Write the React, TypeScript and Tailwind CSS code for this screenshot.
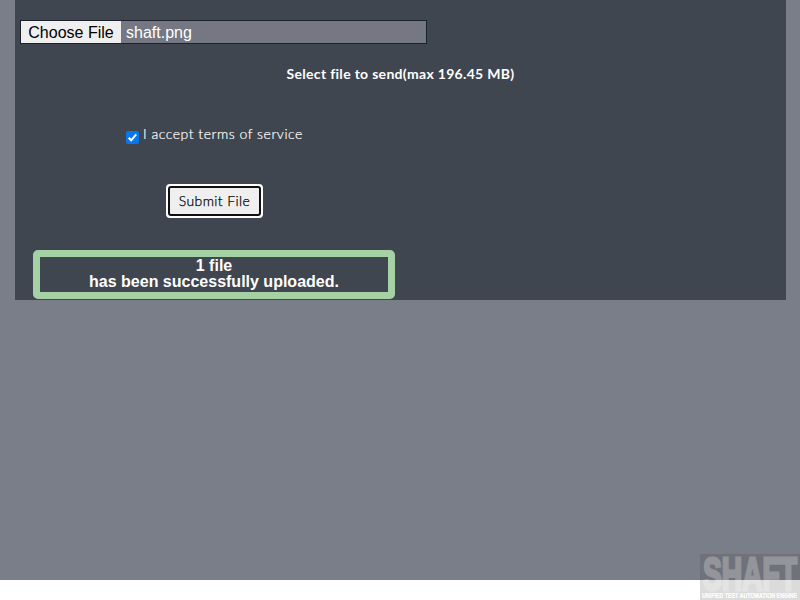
export default function App() {
  return (
    <div className="h-[600px] w-[800px] overflow-hidden bg-white font-['Liberation_Sans',sans-serif]">
      <div className="h-[580px] bg-[#7a7e88] pl-[15px] pr-[14px]">
        <main className="flex h-[300px] flex-col bg-[#3f464f] pt-5 text-white">
          <div className="ml-[5px] flex h-6 w-[407px] shrink-0 items-stretch border border-[#1b222d] bg-[#757782] text-base leading-6">
            <button className="mr-[5px] flex h-[22px] w-[100px] justify-center bg-[#efefef] leading-6 text-black">Choose File</button>
            <span className="h-[22px]">shaft.png</span>
          </div>
          <h1 className="mt-5 text-center font-['Lato',sans-serif] text-[14px] font-bold leading-5 tracking-[0.31px]">
            Select file to send(max 196.45 MB)
          </h1>
          <label className="ml-[111px] mt-10 flex h-5 items-start font-['Lato',sans-serif] text-[14px] leading-5 tracking-[0.52px]">
            <span className="mr-1 mt-[7px] flex size-[13px] items-center justify-center rounded-[2px] bg-[#0877ed]">
              <svg viewBox="0 0 13 13" className="size-[13px]" fill="none" stroke="white" strokeWidth="2">
                <path d="M2.7 6.8 5.2 9.3 10.2 3.3" />
              </svg>
            </span>
            <span className="font-light [-webkit-text-stroke:0.2px_white]">I accept terms of service</span>
          </label>
          <button className="ml-[151px] mt-10 h-[34px] w-[97px] shrink-0 rounded-[4px] border-2 border-white bg-white">
            <span className="flex h-[30px] items-center justify-center rounded-[3px] border-2 border-[#101010] bg-[#efefef] pb-0.5 font-['Lato',sans-serif] text-[14px] font-light tracking-[0.4px] text-black [-webkit-text-stroke:0.25px_black]">Submit File</span>
          </button>
          <div className="ml-[18px] mt-8 h-[49px] w-[362px] shrink-0 rounded-[5px] border-[7px] border-[#a5d1a5] pt-px text-center text-base font-bold leading-4">
            1 file<br />has been successfully uploaded.
          </div>
        </main>
      </div>
      <svg className="absolute left-[700px] top-[554px] h-[46px] w-[100px]" viewBox="0 0 100 46">
        <rect width="100" height="46" fill="#404040" fillOpacity="0.19" />
        <g fill="white" fontWeight="700" stroke="white">
          <g opacity="0.25">
            <text x="3" y="36" textLength="94" lengthAdjust="spacingAndGlyphs" fontSize="47" strokeWidth="3">SHAFT</text>
          </g>
          <text x="2" y="44" textLength="95" lengthAdjust="spacingAndGlyphs" fontSize="7" strokeWidth="0.2">UNIFIED TEST AUTOMATION ENGINE</text>
        </g>
      </svg>
    </div>
  );
}
